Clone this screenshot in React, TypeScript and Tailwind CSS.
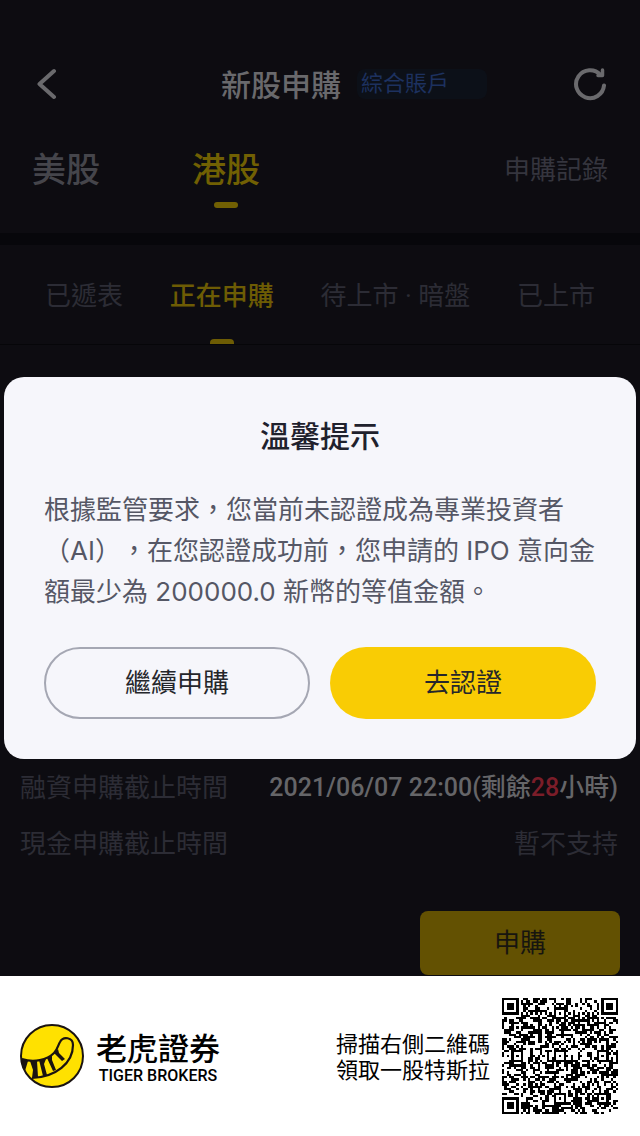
import { Fragment } from 'react'

const MARKETS = ['美股', '港股']

const TABS = ['已遞表', '正在申購', '待上市 · 暗盤', '已上市']

const QR_SIZE = 49
const QR_ALIGNMENT = [6, 24, 42]

function ring(dx: number, dy: number) {
	return Math.max(Math.abs(dx), Math.abs(dy))
}

// Finder squares, timing lines and alignment marks are fixed, the rest is filler data
function isDark(x: number, y: number, noise: number) {
	const last = QR_SIZE - 4

	for (const [cx, cy] of [[3, 3], [last, 3], [3, last]]) {
		const d = ring(x - cx, y - cy)
		if (d <= 4) return d !== 2 && d !== 4
	}

	for (const cy of QR_ALIGNMENT) {
		for (const cx of QR_ALIGNMENT) {
			const d = ring(x - cx, y - cy)
			if (d <= 2 && !(cx === 6 && cy !== 24) && !(cy === 6 && cx !== 24)) return d !== 1
		}
	}

	if (x === 6 || y === 6) return (x + y) % 2 === 0

	return noise > 0.49
}

function buildQrPath() {
	let seed = 20210607
	let path = ''

	for (let y = 0; y < QR_SIZE; y++) {
		for (let x = 0; x < QR_SIZE; x++) {
			seed = (Math.imul(seed, 1664525) + 1013904223) >>> 0
			if (isDark(x, y, seed / 4294967296)) path += `M${x} ${y}h1v1h-1z`
		}
	}

	return path
}

const QR_PATH = buildQrPath()

function BackIcon() {
	return (
		<svg viewBox="0 0 20 32" className="h-8 w-5" fill="none" stroke="currentColor" strokeWidth="4" strokeLinecap="round" strokeLinejoin="round">
			<path d="M17 3 2.500 16 17 29" />
		</svg>
	)
}

function RefreshIcon() {
	return (
		<svg viewBox="0 0 34 34" className="size-[34px]" fill="none" stroke="currentColor" strokeWidth="4" strokeLinecap="round" strokeLinejoin="round">
			<path d="M31 18.500A14 14 0 1 1 27.500 7.800" />
			<path d="M29.500 3V8.500H25" strokeWidth="3.500" />
		</svg>
	)
}

function TigerLogo() {
	return (
		<svg viewBox="0 0 64 64" className="size-16" aria-hidden="true">
			<circle cx="32" cy="32" r="31" fill="#ffe100" />
			<path d="M2 35C14 39 27 36 34 29C38 25 38 21 40 18C43 12 53 13 53 21C53 39 36 53 12 54" fill="none" stroke="#1a1311" strokeWidth="2.200" />
			<path d="M1 34 8 37 5 47C2 43 1 39 1 34ZM10 37H17L18 53 12 54 13 46ZM19 36 26 35 24 40 27 51 23 52ZM27 34 32 31 32 36 36 46 33 47ZM34 29 38 25 39 29 45 35 42 37Z" fill="#1a1311" />
			<circle cx="32" cy="32" r="31" fill="none" stroke="#1a1311" strokeWidth="2" />
		</svg>
	)
}

function Header() {
	return (
		<header className="grid grid-cols-[1fr_auto_1fr] items-center px-[33px] pt-16 pb-4">
			<button type="button" aria-label="返回" className="flex size-10 items-center pl-1 text-[#6a6a6d]">
				<BackIcon />
			</button>
			<div className="flex items-center gap-4 pl-[68px]">
				<h1 className="pt-1 text-[30px] leading-9 font-medium text-[#69696c]">新股申購</h1>
				<span className="w-[130px] rounded-lg bg-[#0c1018] px-1 text-[22px] leading-[30px] text-[#1d315f]">綜合賬戶</span>
			</div>
			<button type="button" aria-label="重新整理" className="flex size-10 items-center justify-end justify-self-end text-[#6a6a6d]">
				<RefreshIcon />
			</button>
		</header>
	)
}

function MarketNav() {
	return (
		<nav className="flex items-start justify-between border-b-12 border-[#07070b] px-8 pt-[26px] pb-[25px]">
			<div className="flex gap-[92px]">
				{MARKETS.map((market) => (
					<button key={market} type="button" className={market === '港股' ? 'flex flex-col items-center gap-2 text-[#716003]' : 'flex flex-col items-center gap-2 text-[#45454b]'}>
						<span className="text-[34px] leading-12 font-medium">{market}</span>
						{market === '港股' && <span className="h-1.5 w-6 rounded-full bg-[#716003]" />}
					</button>
				))}
			</div>
			<a href="#records" className="text-[26px] leading-12 text-[#35353e]">申購記錄</a>
		</nav>
	)
}

function StatusTabs() {
	return (
		<nav className="flex justify-between border-b border-[#060609] px-[45px] pt-7">
			{TABS.map((tab) => (
				<button key={tab} type="button" className={tab === '正在申購' ? 'flex flex-col items-center font-medium text-[#6d5c04]' : 'flex flex-col items-center text-[#2c2c35]'}>
					<span className="h-[66px] text-[26px] leading-[46px]">{tab}</span>
					{tab === '正在申購' && <span className="h-[5px] w-6 rounded-t bg-[#6d5c04]" />}
				</button>
			))}
		</nav>
	)
}

function Deadlines() {
	return (
		<section className="flex flex-col pr-[22px] pl-5">
			<dl className="text-[26px] leading-14 text-[#2c2c35]">
				<div className="flex justify-between">
					<dt>融資申購截止時間</dt>
					<dd className="text-[25px] font-medium text-[#656568]">
						2021/06/07 22:00(剩餘<span className="text-[#7b1d29]">28</span>小時)
					</dd>
				</div>
				<div className="flex justify-between">
					<dt>現金申購截止時間</dt>
					<dd>暫不支持</dd>
				</div>
			</dl>
		</section>
	)
}

function NoticeDialog() {
	const lines = ['根據監管要求，您當前未認證成為專業投資者', '（AI），在您認證成功前，您申請的 IPO 意向金', '額最少為 200000.0 新幣的等值金額。']

	return (
		<div className="absolute inset-0 flex items-center px-1">
			<div role="dialog" aria-labelledby="notice-title" className="w-full rounded-[20px] bg-[#f6f6fb] p-10">
				<h2 id="notice-title" className="text-center text-[30px] leading-10 font-medium text-[#1f212d]">溫馨提示</h2>
				<p className="mt-8 font-['Inter','Noto_Sans_CJK_TC',sans-serif] text-[26px] leading-[41px] text-[#555765] [text-spacing-trim:space-all]">
					{lines.map((line) => (
						<Fragment key={line}>
							{line}
							<br />
						</Fragment>
					))}
				</p>
				<div className="mt-[35px] grid grid-cols-2 gap-5 text-[26px] text-[#25262b]">
					<button type="button" className="h-18 rounded-full border-2 border-[#a5a7b3]">繼續申購</button>
					<button type="button" className="h-18 rounded-full bg-[#f9cc04]">去認證</button>
				</div>
			</div>
		</div>
	)
}

function Footer() {
	return (
		<footer className="flex h-40 items-center justify-between bg-white pr-[22px] pl-5 text-black">
			<div className="flex items-center gap-3">
				<TigerLogo />
				<div className="flex flex-col items-center pt-1">
					<span className="text-[31px] leading-9 font-medium">老虎證券</span>
					<span className="text-[16px] leading-4 font-medium">TIGER BROKERS</span>
				</div>
			</div>
			<div className="flex items-center gap-3">
				<p className="pt-1 text-[22px] leading-[26px]">
					掃描右側二維碼
					<br />
					領取一股特斯拉
				</p>
				<svg viewBox="0 0 49 49" className="size-[116px]" shapeRendering="crispEdges" role="img" aria-label="二維碼">
					<path d={QR_PATH} fill="#000" />
				</svg>
			</div>
		</footer>
	)
}

export default function App() {
	return (
		<div lang="zh-Hant" className="relative flex min-h-screen flex-col bg-[#0d0c11] font-['Roboto','Noto_Sans_CJK_TC',sans-serif]">
			<Header />
			<MarketNav />
			<StatusTabs />
			<main className="flex flex-1 flex-col justify-end">
				<Deadlines />
				<button type="button" className="mt-[39px] mr-5 mb-px h-16 w-[200px] self-end rounded-lg bg-[#635102] text-[26px] text-[#17150f]">申購</button>
			</main>
			<Footer />
			<NoticeDialog />
		</div>
	)
}
